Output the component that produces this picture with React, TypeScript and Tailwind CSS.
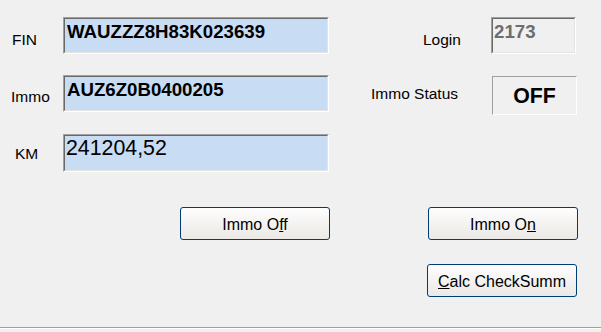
import React from "react";

const font = { fontFamily: '"Liberation Sans", Arial, sans-serif' };

const Field = ({ children, className = "" }: { children: React.ReactNode; className?: string }) => (
  <div className={`border-t border-l border-t-[#a0a0a0] border-l-[#a0a0a0] border-b border-r border-b-white border-r-white ${className}`}>
    <div className="h-full border-t border-l border-t-[#696969] border-l-[#696969] border-b border-r border-b-[#e3e3e3] border-r-[#e3e3e3]">
      {children}
    </div>
  </div>
);

const Button = ({ children, className = "" }: { children: React.ReactNode; className?: string }) => (
  <button
    className={`h-[33px] w-[150px] rounded-[3px] border border-[#003c74] bg-linear-to-b from-[#fefefe] to-[#ebe8e5] pt-[2px] text-[16px] text-black ${className}`}
  >
    {children}
  </button>
);

export default function App() {
  return (
    <div className="h-[332px] w-[601px] overflow-hidden bg-[#f0f0f0] text-black" style={font}>
      <div className="flex h-[327px] flex-col pt-[17px]">
        {/* FIN / Login */}
        <div className="flex h-[37px] items-start">
          <div className="w-[63px] pl-[12px] pt-[14px] text-[15.5px] leading-[18px]">FIN</div>
          <Field className="h-[37px] w-[266px] bg-[#c8dcf3]">
            <div className="pl-[2px] pt-[2px] text-[18.67px] font-bold leading-[22px]">WAUZZZ8H83K023639</div>
          </Field>
          <div className="w-[162px] pl-[94px] pt-[14px] text-[15.5px] leading-[18px]">Login</div>
          <Field className="h-[37px] w-[85px]">
            <div className="pl-[1px] pt-[2px] text-[18.67px] font-bold leading-[22px] text-[#6d6d6d]">2173</div>
          </Field>
        </div>

        {/* Immo / Immo Status */}
        <div className="mt-[21px] flex h-[40px] items-start">
          <div className="w-[63px] pl-[11px] pt-[13px] text-[15.5px] leading-[18px]">Immo</div>
          <Field className="h-[37px] w-[266px] bg-[#c8dcf3]">
            <div className="pl-[2px] pt-[2px] text-[18.67px] font-bold leading-[22px]">AUZ6Z0B0400205</div>
          </Field>
          <div className="w-[163px] pl-[42px] pt-[10px] text-[15.5px] leading-[18px]">Immo Status</div>
          <div className="mt-[1px] flex h-[39px] w-[85px] items-center justify-center border-t border-l border-t-[#a0a0a0] border-l-[#a0a0a0] border-b border-r border-b-white border-r-white text-[21.33px] font-bold leading-[24px]">
            OFF
          </div>
        </div>

        {/* KM */}
        <div className="mt-[19px] flex h-[38px] items-start">
          <div className="w-[63px] pl-[15px] pt-[11px] text-[15.5px] leading-[18px]">KM</div>
          <Field className="h-[38px] w-[266px] bg-[#c8dcf3]">
            <div className="pl-[1px] text-[21.33px] leading-[24px]">241204,52</div>
          </Field>
        </div>

        {/* Buttons */}
        <div className="mt-[35px] flex">
          <Button className="ml-[180px] w-[149px]">
            Immo O<u>f</u>f
          </Button>
          <Button className="ml-[98px]">
            Immo O<u>n</u>
          </Button>
        </div>
        <div className="mt-[24px] flex">
          <Button className="ml-[427px]">
            <u>C</u>alc CheckSumm
          </Button>
        </div>
      </div>
      <div className="h-px bg-[#a0a0a0]" />
      <div className="h-px bg-white" />
    </div>
  );
}
